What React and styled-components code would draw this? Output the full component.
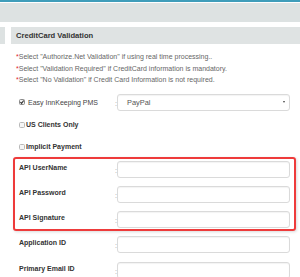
import React from 'react';
import styled, { createGlobalStyle } from 'styled-components';

const GlobalStyle = createGlobalStyle`
  html, body {
    margin: 0;
    padding: 0;
    background: #fff;
  }
  body {
    font-family: 'Liberation Sans', Arial, sans-serif;
  }
`;

const notes = [
  ['Select "Authorize.Net Validation" if using real time processing..'],
  ['Select "Validation Required" if CreditCard information is mandatory.'],
  ['Select "No Validation" if Credit Card Information is not required.'],
];

const CheckBox = ({ checked }) => (
  <Box viewBox="0 0 6 6" width="6" height="6">
    <rect
      x="0.5"
      y="0.5"
      width="5"
      height="5"
      rx="1"
      fill={checked ? '#f2f2f2' : '#f6f6f6'}
      stroke={checked ? '#8a8a8a' : '#b9b9b9'}
      strokeWidth="1"
    />
    {checked && (
      <path
        d="M1.4 3.1 L2.6 4.4 L4.7 1.5"
        fill="none"
        stroke="#333"
        strokeWidth="1.1"
      />
    )}
  </Box>
);

const InputRow = ({ label }) => (
  <Row>
    <Label>{label}</Label>
    <Colon>:</Colon>
    <Field />
  </Row>
);

export default function App() {
  return (
    <Page>
      <GlobalStyle />
      <TopRule />
      <TopBand />
      <HeaderRow>
        <Stub />
        <Header>CreditCard Validation</Header>
      </HeaderRow>

      <Notes>
        {notes.map(([text]) => (
          <div key={text}>
            <Star>*</Star>
            {text}
          </div>
        ))}
      </Notes>

      <Form>
        <Row>
          <Label $plain>
            <CheckBox checked />
            <span>Easy InnKeeping PMS</span>
          </Label>
          <Colon>:</Colon>
          <Select>
            <span>PayPal</span>
            <Arrow />
          </Select>
        </Row>

        <CheckRow $top={8}>
          <CheckBox />
          <span>US Clients Only</span>
        </CheckRow>
        <CheckRow $top={10}>
          <CheckBox />
          <span>Implicit Payment</span>
        </CheckRow>

        <Highlight>
          <InputRow label="API UserName" />
          <InputRow label="API Password" />
          <InputRow label="API Signature" />
        </Highlight>

        <Spaced $top={5}>
          <InputRow label="Application ID" />
        </Spaced>
        <Spaced $top={9}>
          <InputRow label="Primary Email ID" />
        </Spaced>
      </Form>
    </Page>
  );
}

const Page = styled.div`
  width: 300px;
  height: 277px;
  overflow: hidden;
  background: #fff;
`;

const TopRule = styled.div`
  height: 2px;
  background: #3f9dba;
  margin-bottom: 1px;
`;

const TopBand = styled.div`
  height: 19px;
  background: #dde2e2;
`;

const HeaderRow = styled.div`
  display: flex;
  gap: 6px;
  height: 17px;
  margin-top: 5px;
`;

const Stub = styled.div`
  width: 5px;
  background: #dde2e2;
`;

const Header = styled.div`
  flex: 1;
  display: flex;
  align-items: center;
  padding-left: 5px;
  background: #dfe3e3;
  color: #333;
  font-size: 7.6px;
  font-weight: 700;
`;

const Notes = styled.div`
  margin: 7px 0 0 16px;
  font-size: 7px;
  line-height: 11.5px;
  color: #666;
  white-space: nowrap;
`;

const Star = styled.span`
  color: #e0262c;
`;

const Form = styled.div`
  display: flex;
  flex-direction: column;
  width: 283px;
  margin: 8px 0 0 13px;
`;

const Row = styled.div`
  display: flex;
  align-items: flex-start;
  height: 17px;
  padding: 0 6px;
`;

const Label = styled.div`
  width: 96px;
  display: flex;
  align-items: center;
  gap: 3px;
  padding-top: ${(p) => (p.$plain ? '4px' : '2px')};
  font-size: 7px;
  line-height: 9px;
  font-weight: ${(p) => (p.$plain ? 400 : 700)};
  color: ${(p) => (p.$plain ? '#444' : '#333')};
  white-space: nowrap;
`;

const Colon = styled.div`
  width: 2px;
  padding-top: 5px;
  font-size: 7px;
  line-height: 9px;
  color: #999;
`;

const Field = styled.div`
  width: 173px;
  height: 17px;
  box-sizing: border-box;
  border: 1px solid #dadada;
  border-radius: 3px;
  background: #fff;
  box-shadow: inset 0 1px 1px rgba(0, 0, 0, 0.05);
`;

const Select = styled(Field)`
  display: flex;
  align-items: center;
  justify-content: space-between;
  padding: 0 4px 0 9px;
  font-size: 7.4px;
  color: #555;
`;

const Arrow = styled.span`
  width: 0;
  height: 0;
  border-left: 1.7px solid transparent;
  border-right: 1.7px solid transparent;
  border-top: 2.5px solid #444;
`;

const Box = styled.svg`
  flex: none;
  display: block;
`;

const CheckRow = styled.div`
  display: flex;
  align-items: center;
  gap: 1px;
  height: 12px;
  margin-top: ${(p) => p.$top}px;
  padding: 0 6px;
  font-size: 7px;
  font-weight: 700;
  color: #333;
`;

const Highlight = styled.div`
  display: flex;
  flex-direction: column;
  gap: 8px;
  margin-top: 4px;
  padding: 2px 0 1px;
  border: 2px solid #ee3b3b;
  border-radius: 3px;
  box-shadow: 1px 1px 3px rgba(0, 0, 0, 0.15);

  & > ${Row} {
    padding: 0 4px;
  }
`;

const Spaced = styled.div`
  margin-top: ${(p) => p.$top}px;
`;
